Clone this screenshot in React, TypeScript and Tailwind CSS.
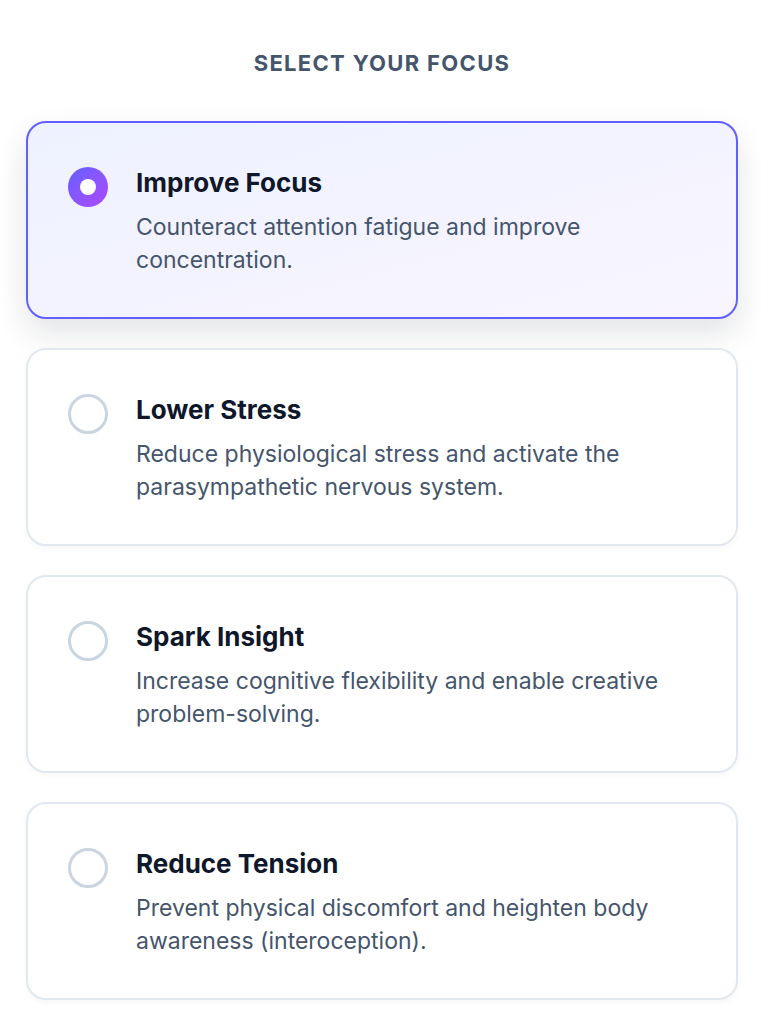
const options = [
  {
    title: "Improve Focus",
    desc: "Counteract attention fatigue and improve concentration.",
  },
  {
    title: "Lower Stress",
    desc: "Reduce physiological stress and activate the parasympathetic nervous system.",
  },
  {
    title: "Spark Insight",
    desc: "Increase cognitive flexibility and enable creative problem-solving.",
  },
  {
    title: "Reduce Tension",
    desc: "Prevent physical discomfort and heighten body awareness (interoception).",
  },
];

const App = () => {
  const selected = 0;
  return (
    <div className="min-h-screen bg-white pl-[26px] pr-[23px] pt-[49px] pb-8 font-['Inter','Noto_Sans',sans-serif]">
      <h2 className="text-center text-[22px] leading-[28px] font-bold tracking-[0.06em] text-slate-600">
        SELECT YOUR FOCUS
      </h2>
      <div className="mt-[44px] flex flex-col gap-[29px]">
        {options.map((o, i) => {
          const active = i === selected;
          return (
            <div
              key={o.title}
              className={
                active
                  ? "flex items-start gap-[28px] rounded-[20px] border-2 border-indigo-500 bg-gradient-to-br from-[#eef1ff] to-[#f8f5ff] px-[40px] pt-[44px] pb-[40px] shadow-[0_14px_32px_rgba(15,23,42,0.12)]"
                  : "flex items-start gap-[28px] rounded-[20px] border-2 border-slate-200 bg-white px-[40px] pt-[44px] pb-[40px] shadow-[0_2px_6px_rgba(15,23,42,0.04)]"
              }
            >
              {active ? (
                <div className="flex h-[40px] w-[40px] shrink-0 items-center justify-center rounded-full bg-gradient-to-br from-indigo-500 to-purple-500">
                  <div className="h-[16px] w-[16px] rounded-full bg-white" />
                </div>
              ) : (
                <div className="h-[40px] w-[40px] shrink-0 rounded-full border-[3px] border-slate-300" />
              )}
              <div className="flex-1">
                <h3 className="text-[26px] leading-[32px] font-bold text-slate-900">
                  {o.title}
                </h3>
                <p className="mt-[12px] text-[23px] leading-[33px] text-slate-600">
                  {o.desc}
                </p>
              </div>
            </div>
          );
        })}
      </div>
    </div>
  );
};

export default App;
